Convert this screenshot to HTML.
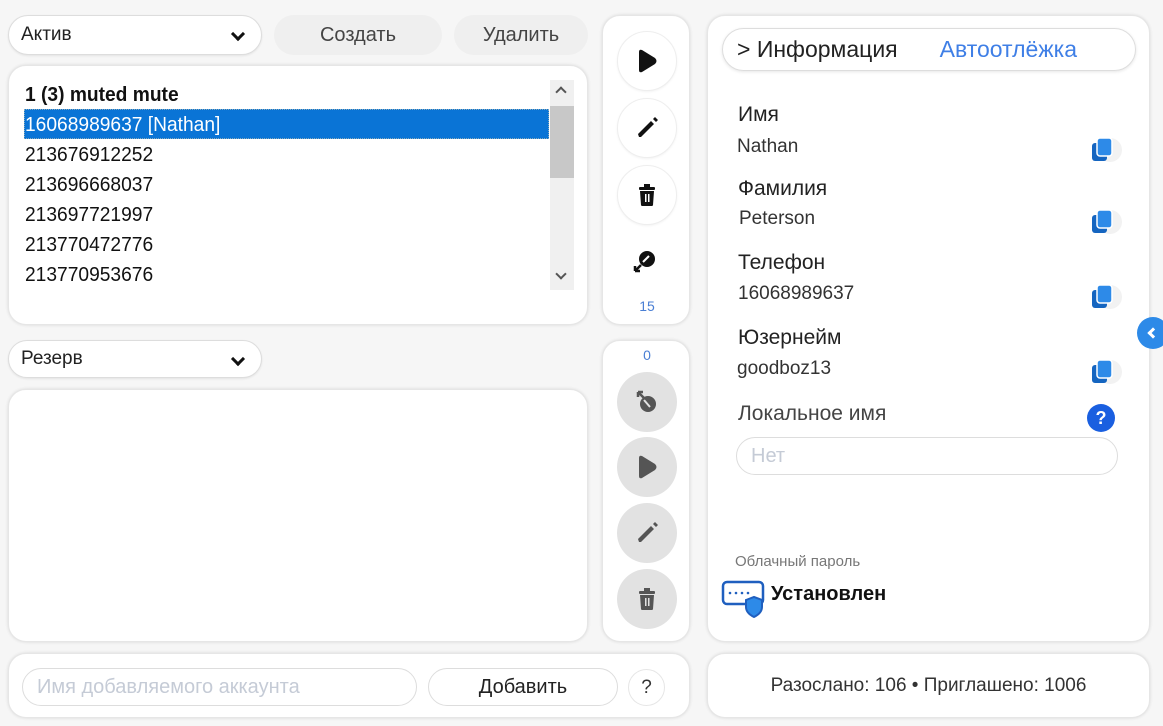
<!DOCTYPE html>
<html><head><meta charset="utf-8"><style>
*{box-sizing:border-box;margin:0;padding:0}
body{width:1163px;height:726px;background:#f6f6f6;font-family:"Liberation Sans",sans-serif;position:relative;overflow:hidden;color:#222}
.p{position:absolute;background:#fff;border-radius:18px;box-shadow:0 0 3px rgba(0,0,0,.12);border:1px solid #e6e6e6}
.sel{position:absolute;background:#fff;border:1px solid #ddd;border-radius:20px;font-size:19px;padding-left:12px;display:flex;align-items:center;box-shadow:0 1px 2px rgba(0,0,0,.08)}
.sel:after{content:"";position:absolute;right:18px;top:13px;width:7px;height:7px;border-right:3px solid #111;border-bottom:3px solid #111;transform:rotate(45deg)}
.btn{position:absolute;background:#efefef;border-radius:20px;font-size:20px;color:#444;display:flex;align-items:center;justify-content:center}
.row{position:absolute;left:25px;font-size:20px;height:30px;line-height:30px;color:#111;transform:scaleX(.96);transform-origin:left}
.cb{position:absolute;width:60px;height:60px;border-radius:50%;left:14px;display:flex;align-items:center;justify-content:center}
.w{background:#fff;border:1px solid #eee;box-shadow:0 1px 2px rgba(0,0,0,.05)}
.g{background:#e2e2e2}
.lab{position:absolute;left:738px;font-size:21px;color:#222}
.val{position:absolute;left:737px;font-size:19px;color:#333}
.cp{position:absolute;left:1090px;width:32px;height:26px}
</style></head><body>
<div class="sel" style="left:8px;top:15px;width:254px;height:40px">Актив</div>
<div class="btn" style="left:274px;top:15px;width:168px;height:40px">Создать</div>
<div class="btn" style="left:454px;top:15px;width:134px;height:40px">Удалить</div>

<div class="p" style="left:8px;top:65px;width:580px;height:260px">
 <div style="position:absolute;left:541px;top:14px;width:24px;height:210px;background:#f0f0f0"></div>
 <div style="position:absolute;left:541px;top:40px;width:24px;height:72px;background:#c8c8c8"></div>
 <div style="position:absolute;left:548px;top:22px;width:8px;height:8px;border-left:2px solid #555;border-top:2px solid #555;transform:rotate(45deg)"></div>
 <div style="position:absolute;left:548px;top:204px;width:8px;height:8px;border-right:2px solid #555;border-bottom:2px solid #555;transform:rotate(45deg)"></div>
 <div style="position:absolute;left:15px;top:43px;width:525px;height:30px;background:#0a74d6;border:1px dotted #8ab"></div>
</div>
<div class="row" style="top:80px;font-weight:bold">1 (3) muted mute</div>
<div class="row" style="top:110px;color:#fff">16068989637 [Nathan]</div>
<div class="row" style="top:140px">213676912252</div>
<div class="row" style="top:170px">213696668037</div>
<div class="row" style="top:200px">213697721997</div>
<div class="row" style="top:230px">213770472776</div>
<div class="row" style="top:260px">213770953676</div>

<div class="p" style="left:602px;top:15px;width:88px;height:310px">
 <div class="cb w" style="top:15px"><svg width="22" height="24" viewBox="0 0 22 24"><path d="M3 3Q3 0 6 1L19 9Q22 12 19 15L6 23Q3 24 3 21Z" fill="#111"/></svg></div>
 <div class="cb w" style="top:82px"><svg width="24" height="24" viewBox="0 0 24 24"><path d="M4 21L3 18L16 5L19 8L6 21Z M18 3L20 1L23 4L21 6Z" fill="#111"/></svg></div>
 <div class="cb w" style="top:149px"><svg width="20" height="24" viewBox="0 0 20 24"><rect x="2" y="4" width="16" height="3" rx="1" fill="#111"/><rect x="7" y="1" width="6" height="3" fill="#111"/><path d="M3 8H17L16 22Q16 23 14 23H6Q4 23 4 22Z" fill="#111"/><rect x="8" y="11" width="1.5" height="8" fill="#fff"/><rect x="11" y="11" width="1.5" height="8" fill="#fff"/></svg></div>
 <div style="position:absolute;left:28px;top:232px"><svg width="28" height="28" viewBox="0 0 28 28"><circle cx="16" cy="11" r="8" fill="#111"/><path d="M12 14L18 8" stroke="#fff" stroke-width="2"/><path d="M10 17L4 23M4 23V18M4 23H9" stroke="#111" stroke-width="2.5" fill="none"/></svg></div>
 <div style="position:absolute;left:0;width:88px;top:282px;text-align:center;font-size:14px;color:#4a7fd4">15</div>
</div>

<div class="sel" style="left:8px;top:340px;width:254px;height:38px">Резерв</div>
<div class="p" style="left:8px;top:389px;width:580px;height:253px"></div>

<div class="p" style="left:602px;top:340px;width:88px;height:302px">
 <div style="position:absolute;left:0;width:88px;top:6px;text-align:center;font-size:14px;color:#4a7fd4">0</div>
 <div class="cb g" style="top:31px"><svg width="28" height="28" viewBox="0 0 28 28"><circle cx="15" cy="16" r="8" fill="#555"/><path d="M11 12L17 19" stroke="#e2e2e2" stroke-width="2"/><path d="M12 11L5 4M5 4V9M5 4H10" stroke="#555" stroke-width="2.5" fill="none"/></svg></div>
 <div class="cb g" style="top:96px"><svg width="22" height="24" viewBox="0 0 22 24"><path d="M3 3Q3 0 6 1L19 9Q22 12 19 15L6 23Q3 24 3 21Z" fill="#555"/></svg></div>
 <div class="cb g" style="top:162px"><svg width="24" height="24" viewBox="0 0 24 24"><path d="M4 21L3 18L16 5L19 8L6 21Z M18 3L20 1L23 4L21 6Z" fill="#555"/></svg></div>
 <div class="cb g" style="top:228px"><svg width="20" height="24" viewBox="0 0 20 24"><rect x="2" y="4" width="16" height="3" rx="1" fill="#555"/><rect x="7" y="1" width="6" height="3" fill="#555"/><path d="M3 8H17L16 22Q16 23 14 23H6Q4 23 4 22Z" fill="#555"/><rect x="8" y="11" width="1.5" height="8" fill="#e2e2e2"/><rect x="11" y="11" width="1.5" height="8" fill="#e2e2e2"/></svg></div>
</div>

<div class="p" style="left:8px;top:653px;width:682px;height:65px">
 <div style="position:absolute;left:13px;top:14px;width:395px;height:38px;border:1px solid #ddd;border-radius:20px;font-size:20px;color:#c5cbd6;padding-left:14px;line-height:36px">Имя добавляемого аккаунта</div>
 <div style="position:absolute;left:419px;top:14px;width:190px;height:38px;border:1px solid #ddd;border-radius:20px;font-size:20px;text-align:center;line-height:36px;color:#222">Добавить</div>
 <div style="position:absolute;left:619px;top:15px;width:37px;height:37px;border:1px solid #e6e6e6;border-radius:50%;font-size:19px;text-align:center;line-height:35px;color:#333">?</div>
</div>

<div class="p" style="left:707px;top:15px;width:443px;height:627px">
 <div style="position:absolute;left:14px;top:12px;width:414px;height:43px;border:1px solid #ddd;border-radius:22px;box-shadow:0 1px 3px rgba(0,0,0,.1);font-size:23px;line-height:41px;padding-left:14px"><span style="color:#222">&gt; Информация</span><span style="color:#3f7fe6;margin-left:42px">Автоотлёжка</span></div>
</div>
<div class="lab" style="top:103px">Имя</div>
<div class="val" style="top:136px">Nathan</div>
<div class="lab" style="top:177px">Фамилия</div>
<div class="val" style="top:208px;left:739px">Peterson</div>
<div class="lab" style="top:251px">Телефон</div>
<div class="val" style="top:283px;left:738px">16068989637</div>
<div class="lab" style="top:326px">Юзернейм</div>
<div class="val" style="top:358px">goodboz13</div>
<div class="lab" style="top:402px;color:#444">Локальное имя</div>

<svg class="cp" style="top:137px" viewBox="0 0 32 26"><circle cx="20" cy="13" r="12" fill="#f2f2f2"/><rect x="2" y="6" width="15" height="18" rx="3" fill="#1565c0"/><rect x="7" y="1" width="15" height="18" rx="3" fill="#2d8ae8" stroke="#fff" stroke-width="1.5"/></svg>
<svg class="cp" style="top:209px" viewBox="0 0 32 26"><circle cx="20" cy="13" r="12" fill="#f2f2f2"/><rect x="2" y="6" width="15" height="18" rx="3" fill="#1565c0"/><rect x="7" y="1" width="15" height="18" rx="3" fill="#2d8ae8" stroke="#fff" stroke-width="1.5"/></svg>
<svg class="cp" style="top:284px" viewBox="0 0 32 26"><circle cx="20" cy="13" r="12" fill="#f2f2f2"/><rect x="2" y="6" width="15" height="18" rx="3" fill="#1565c0"/><rect x="7" y="1" width="15" height="18" rx="3" fill="#2d8ae8" stroke="#fff" stroke-width="1.5"/></svg>
<svg class="cp" style="top:359px" viewBox="0 0 32 26"><circle cx="20" cy="13" r="12" fill="#f2f2f2"/><rect x="2" y="6" width="15" height="18" rx="3" fill="#1565c0"/><rect x="7" y="1" width="15" height="18" rx="3" fill="#2d8ae8" stroke="#fff" stroke-width="1.5"/></svg>

<div style="position:absolute;left:1087px;top:404px;width:28px;height:28px;border-radius:50%;background:#1a5fe0;color:#fff;font-weight:bold;font-size:18px;text-align:center;line-height:28px">?</div>
<div style="position:absolute;left:736px;top:437px;width:382px;height:38px;border:1px solid #ddd;border-radius:20px;font-size:20px;color:#c5cbd6;padding-left:14px;line-height:36px">Нет</div>

<div style="position:absolute;left:735px;top:553px;font-size:15px;color:#777">Облачный пароль</div>
<svg style="position:absolute;left:721px;top:580px" width="46" height="38" viewBox="0 0 46 38"><rect x="2" y="2" width="40" height="22" rx="4" fill="#fff" stroke="#1f5fbf" stroke-width="2.5"/><g fill="#1f5fbf"><circle cx="9" cy="13" r="1.3"/><circle cx="15" cy="13" r="1.3"/><circle cx="21" cy="13" r="1.3"/><circle cx="27" cy="13" r="1.3"/></g><path d="M25 20L33 17L41 20V27Q41 33 33 37Q25 33 25 27Z" fill="#2d8ae8" stroke="#1f5fbf" stroke-width="2"/></svg>
<div style="position:absolute;left:771px;top:583px;font-size:20px;font-weight:bold;color:#111">Установлен</div>

<div class="p" style="left:707px;top:653px;width:443px;height:65px;font-size:19px;color:#333;text-align:center;line-height:63px">Разослано: 106 • Приглашено: 1006</div>

<div style="position:absolute;left:1137px;top:317px;width:32px;height:32px;border-radius:50%;background:#2d8ae8"><div style="position:absolute;left:12px;top:12px;width:8px;height:8px;border-left:3px solid #fff;border-bottom:3px solid #fff;transform:rotate(45deg)"></div></div>
</body></html>
